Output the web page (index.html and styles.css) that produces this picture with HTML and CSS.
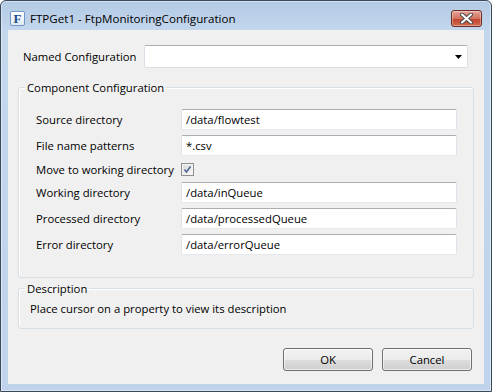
FILE: index.html
```html
<!DOCTYPE html>
<html>
<head>
    <title>FTPGet1 - FtpMonitoringConfiguration</title>
    <link rel="stylesheet" href="styles.css">
</head>
<body>
    <div class="window">
        <div class="titlebar">
            <span class="app-icon">F</span>
            <span class="title">FTPGet1 - FtpMonitoringConfiguration</span>
            <button class="close-btn" title="Close">
                <svg width="13" height="11" viewBox="0 0 13 11">
                    <path d="M2 1.5 L11 9.5 M11 1.5 L2 9.5" stroke="#4a4a4a" stroke-width="4" stroke-linecap="round"></path>
                    <path d="M2 1.5 L11 9.5 M11 1.5 L2 9.5" stroke="#ffffff" stroke-width="2" stroke-linecap="round"></path>
                </svg>
            </button>
        </div>

        <div class="client">
            <div class="named-row">
                <label class="named-label">Named Configuration</label>
                <div class="combo">
                    <svg width="7" height="4" viewBox="0 0 7 4">
                        <polygon points="0 0 7 0 3.5 4" fill="#000"></polygon>
                    </svg>
                </div>
            </div>

            <fieldset class="group component-group">
                <legend>Component Configuration</legend>
                <div class="form-grid">
                    <label>Source directory</label>
                    <div class="textbox">/data/flowtest</div>

                    <label>File name patterns</label>
                    <div class="textbox">*.csv</div>

                    <label class="short">Move to working directory</label>
                    <div class="short">
                        <span class="checkbox">
                            <svg width="9" height="9" viewBox="0 0 9 9">
                                <path d="M1.5 4.5 L3.5 7 L7.5 1.5" stroke="#4d6494" stroke-width="1.6" fill="none"></path>
                            </svg>
                        </span>
                    </div>

                    <label>Working directory</label>
                    <div class="textbox">/data/inQueue</div>

                    <label>Processed directory</label>
                    <div class="textbox">/data/processedQueue</div>

                    <label>Error directory</label>
                    <div class="textbox">/data/errorQueue</div>
                </div>
            </fieldset>

            <fieldset class="group description-group">
                <legend>Description</legend>
                <p>Place cursor on a property to view its description</p>
            </fieldset>

            <div class="buttons">
                <button class="btn">OK</button>
                <button class="btn">Cancel</button>
            </div>
        </div>
    </div>
</body>
</html>
```

FILE: styles.css
```css
* {
    margin: 0;
    padding: 0;
    box-sizing: border-box;
}

body {
    margin: 0;
    background-color: #ffffff;
    font-family: "Open Sans", "Noto Sans", Arial, sans-serif;
    font-size: 11.3px;
    color: #000000;
}

.window {
    width: 492px;
    height: 392px;
    display: flex;
    flex-direction: column;
    padding: 0 7px 7px 7px;
    border: 1px solid #3b4a5a;
    border-radius: 6px 6px 0 0;
    background: linear-gradient(#b3cae4, #c3d7ed 30px, #bfd4ec);
    box-shadow: inset 0 0 0 1px rgba(255, 255, 255, 0.45);
}

/* Title bar */
.titlebar {
    height: 29px;
    padding-top: 6px;
    display: flex;
    align-items: center;
}

.app-icon {
    width: 15px;
    height: 15px;
    margin-left: 2px;
    border: 1px solid #6f98c4;
    border-radius: 2px;
    background: linear-gradient(#ffffff, #dfeaf5);
    display: flex;
    align-items: center;
    justify-content: center;
    font-family: "Liberation Serif", serif;
    font-weight: bold;
    font-size: 13px;
    color: #1b4f88;
}

.title {
    margin-left: 5px;
    font-size: 11.6px;
    color: #000000;
}

.close-btn {
    margin-left: auto;
    margin-right: 2px;
    width: 31px;
    height: 17px;
    border: 1px solid #6e2a22;
    border-radius: 3px;
    background: linear-gradient(#e6a497, #d27361 50%, #c1412c 51%, #cf6b4f);
    box-shadow: inset 0 0 0 1px rgba(255, 255, 255, 0.35);
    display: flex;
    align-items: center;
    justify-content: center;
}

/* Client area */
.client {
    flex: 1;
    background-color: #f0f0f0;
    display: flex;
    flex-direction: column;
}

.named-row {
    display: flex;
    align-items: center;
    margin: 15px 16px 0 15px;
}

.named-label {
    width: 121px;
}

.combo {
    flex: 1;
    height: 23px;
    background-color: #ffffff;
    border: 1px solid #dbdfe6;
    border-top-color: #abadb3;
    border-radius: 2px;
    display: flex;
    align-items: center;
    justify-content: flex-end;
    padding-right: 5px;
}

.group {
    margin: 0 10px;
    border: 1px solid #d5dfe5;
    border-radius: 3px;
    box-shadow: inset 1px 1px 0 #ffffff;
}

.group legend {
    padding: 0 2px;
    line-height: 15px;
}

.component-group {
    margin-top: 12px;
    padding: 14px 16px 22px 17px;
}

.component-group legend {
    margin-left: -11px;
}

.form-grid {
    display: grid;
    grid-template-columns: 145px 1fr;
    row-gap: 5px;
    align-items: center;
}

.form-grid .short {
    height: 16px;
    display: flex;
    align-items: center;
    white-space: nowrap;
}

.textbox {
    height: 21px;
    line-height: 19px;
    padding-left: 4px;
    background-color: #ffffff;
    border: 1px solid #e2e3ea;
    border-top-color: #abadb3;
    border-bottom-color: #e3e9ef;
    border-radius: 2px;
}

.checkbox {
    width: 13px;
    height: 13px;
    border: 1px solid #8e8f8f;
    background: linear-gradient(135deg, #d8d8d8, #fbfbfb);
    box-shadow: inset 0 0 0 1px #f4f4f4;
    display: flex;
    align-items: center;
    justify-content: center;
}

.description-group {
    margin-top: 3px;
    padding: 5px 10px 12px 11px;
}

.description-group legend {
    margin-left: -5px;
}

.description-group p {
    line-height: 15px;
}

.buttons {
    display: flex;
    justify-content: flex-end;
    gap: 9px;
    margin: 19px 12px 0 0;
}

.btn {
    width: 90px;
    height: 23px;
    font-family: inherit;
    font-size: 11.3px;
    color: #000000;
    border: 1px solid #707070;
    border-radius: 3px;
    background: linear-gradient(#f2f2f2, #ebebeb 50%, #dddddd 51%, #cfcfcf);
    box-shadow: inset 0 0 0 1px rgba(255, 255, 255, 0.6);
}
```
